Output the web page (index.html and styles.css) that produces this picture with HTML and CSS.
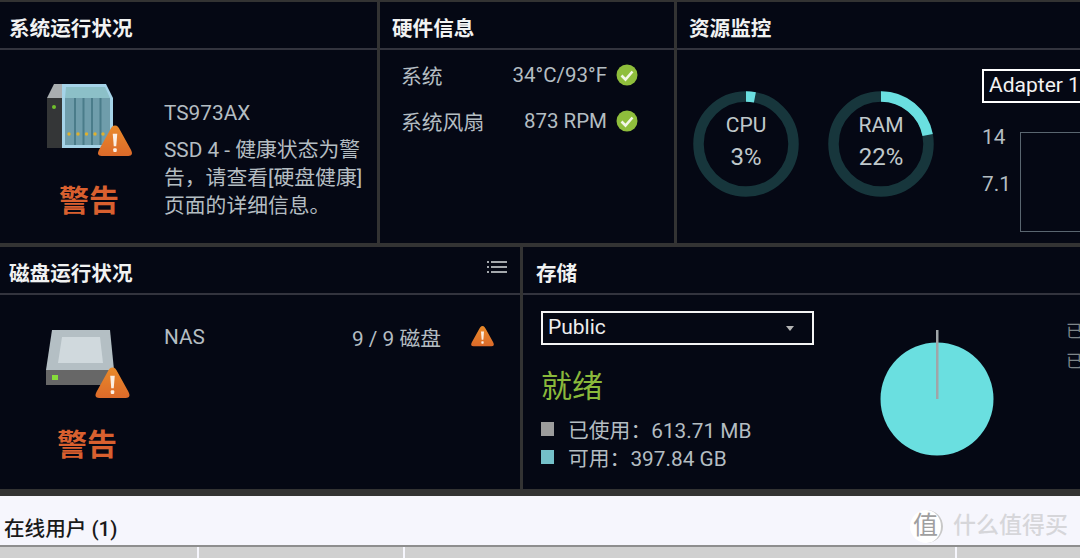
FILE: index.html
```html
<!DOCTYPE html>
<html lang="zh">
<head>
<meta charset="utf-8">
<title>NAS</title>
<link rel="stylesheet" href="styles.css">
</head>
<body>
<svg class="defs" width="0" height="0" aria-hidden="true">
  <defs>
    <linearGradient id="warnGrad" x1="0" y1="0" x2="0" y2="1">
      <stop offset="0" stop-color="#e98a2a"/>
      <stop offset="1" stop-color="#dc6a2a"/>
    </linearGradient>
    <symbol id="warn" viewBox="0 0 36 32">
      <path d="M18 1.500C20.500 1.500 21.500 3.500 23 6L33.500 25C35.500 29 34.500 31 31 31H5C1.500 31 0.500 29 2.500 25L13 6C14.500 3.500 15.500 1.500 18 1.500Z" fill="url(#warnGrad)"/>
      <path d="M15.800 9.500H20.200L19.200 21.500H16.800Z" fill="#fbeee2"/>
      <rect x="16.300" y="23.500" width="3.400" height="3.600" rx="1" fill="#fbeee2"/>
    </symbol>
  </defs>
</svg>
<main class="dash">
  <section class="row row-top">
    <article class="panel panel-sys">
      <header class="head"><h2>系统运行状况</h2></header>
      <div class="body split">
        <div class="state state-sys">
          <svg class="device" width="104" height="80" viewBox="0 0 104 80">
            <path d="M17 16L24 2H32V16Z" fill="#a9adaf"/>
            <rect x="17" y="16" width="15" height="50" fill="#343637"/>
            <circle cx="24" cy="25" r="2" fill="#6fc02c"/>
            <path d="M32 16V2H76L83 16V66H32Z" fill="#a5d3e8"/>
            <path d="M36 5H75L80 16H35Z" fill="#8cc0c8"/>
            <rect x="35" y="16" width="45" height="47" fill="#6f9dab"/>
            <g fill="#4a7c8a"><rect x="44" y="16" width="2" height="47"/><rect x="52.500" y="16" width="2" height="47"/><rect x="61" y="16" width="2" height="47"/><rect x="69.500" y="16" width="2" height="47"/></g>
            <g fill="#e0b12c"><circle cx="39" cy="52" r="1.700"/><circle cx="48" cy="52" r="1.700"/><circle cx="56.500" cy="52" r="1.700"/><circle cx="65" cy="52" r="1.700"/><circle cx="73" cy="52" r="1.700"/></g>
            <use href="#warn" x="66.500" y="42" width="37" height="33"/>
          </svg>
          <strong class="alert">警告</strong>
        </div>
        <div class="sys-text">
          <p class="model">TS973AX</p>
          <p class="desc">SSD 4 - 健康状态为警告，请查看[硬盘健康]页面的详细信息。</p>
        </div>
      </div>
    </article>
    <article class="panel panel-hw">
      <header class="head"><h2>硬件信息</h2></header>
      <div class="body hw">
        <div class="hw-row">
          <span class="hw-name">系统</span><span class="hw-val">34°C/93°F</span>
          <svg width="22" height="22" viewBox="0 0 22 22"><circle cx="11" cy="11" r="10.500" fill="#8fbe3c"/><path d="M5.500 11.500L9.500 15.500L16.500 7.500" fill="none" stroke="#f2f6e6" stroke-width="2.600"/></svg>
        </div>
        <div class="hw-row">
          <span class="hw-name">系统风扇</span><span class="hw-val">873 RPM</span>
          <svg width="22" height="22" viewBox="0 0 22 22"><circle cx="11" cy="11" r="10.500" fill="#8fbe3c"/><path d="M5.500 11.500L9.500 15.500L16.500 7.500" fill="none" stroke="#f2f6e6" stroke-width="2.600"/></svg>
        </div>
      </div>
    </article>
    <article class="panel panel-res">
      <header class="head"><h2>资源监控</h2></header>
      <div class="body res">
        <div class="ring">
          <svg width="106" height="106" viewBox="0 0 106 106"><circle cx="53" cy="53" r="47.500" fill="none" stroke="#17363c" stroke-width="10.500"/><circle cx="53" cy="53" r="47.500" fill="none" stroke="#6adfe0" stroke-width="10.500" pathLength="100" stroke-dasharray="3 97" transform="rotate(-90 53 53)"/></svg>
          <div class="ring-label"><span>CPU</span><span class="pct">3%</span></div>
        </div>
        <div class="ring">
          <svg width="106" height="106" viewBox="0 0 106 106"><circle cx="53" cy="53" r="47.500" fill="none" stroke="#17363c" stroke-width="10.500"/><circle cx="53" cy="53" r="47.500" fill="none" stroke="#6adfe0" stroke-width="10.500" pathLength="100" stroke-dasharray="22 78" transform="rotate(-90 53 53)"/></svg>
          <div class="ring-label"><span>RAM</span><span class="pct">22%</span></div>
        </div>
        <div class="net">
          <div class="adapter">Adapter 1</div>
          <div class="chart">
            <div class="axis"><span>14</span><span>7.1</span></div>
            <div class="plot"></div>
          </div>
        </div>
      </div>
    </article>
  </section>
  <section class="row row-bottom">
    <article class="panel panel-disk">
      <header class="head">
        <h2>磁盘运行状况</h2>
        <svg class="list-icon" width="20" height="14" viewBox="0 0 20 14"><g fill="#a4a8ac"><rect x="0" y="1" width="2" height="2"/><rect x="0" y="6" width="2" height="2"/><rect x="0" y="11" width="2" height="2"/><rect x="4" y="1" width="16" height="2"/><rect x="4" y="6" width="16" height="2"/><rect x="4" y="11" width="16" height="2"/></g></svg>
      </header>
      <div class="body split">
        <div class="state state-disk">
          <svg class="device" width="100" height="76" viewBox="0 0 100 76">
            <path d="M18 1H76L80 41H12Z" fill="#b4bfc4"/>
            <path d="M28 8H66L69 34H24Z" fill="#d0d9dd"/>
            <rect x="12" y="41" width="68" height="15" fill="#676767"/>
            <rect x="18" y="46" width="6" height="5" fill="#86dc3a"/>
            <use href="#warn" x="60" y="37" width="37" height="33"/>
          </svg>
          <strong class="alert">警告</strong>
        </div>
        <div class="disk-row">
          <span class="disk-name">NAS</span>
          <span class="disk-count">9 / 9 磁盘</span>
          <svg width="25" height="22" viewBox="0 0 36 32"><use href="#warn" width="36" height="32"/></svg>
        </div>
      </div>
    </article>
    <article class="panel panel-store">
      <header class="head"><h2>存储</h2></header>
      <div class="body store">
        <div class="store-left">
          <div class="select"><span>Public</span><i class="caret"></i></div>
          <div class="ready">就绪</div>
          <ul class="legend">
            <li><i class="sw sw-used"></i>已使用：613.71 MB</li>
            <li><i class="sw sw-free"></i>可用：397.84 GB</li>
          </ul>
        </div>
        <svg class="pie" width="114" height="126" viewBox="0 0 114 126"><circle cx="57" cy="69" r="56.500" fill="#6adfe0"/><rect x="56" y="0" width="2.500" height="69" fill="#a0a5a8"/></svg>
        <div class="store-side"><span>已使用</span><span>已分配</span></div>
      </div>
    </article>
  </section>
  <section class="users">
    <div class="users-head">
      <h2>在线用户 (1)</h2>
      <div class="brand"><span class="brand-mark">值</span><span class="brand-text">什么值得买</span></div>
    </div>
    <div class="table-head"><span class="c1"></span><span class="c2"></span><span class="c3"></span><span class="c4"></span></div>
  </section>
</main>
</body>
</html>
```
FILE: styles.css
```css
* { box-sizing: border-box; }
html, body { margin: 0; padding: 0; width: 1080px; height: 558px; overflow: hidden; }
body {
  background: #333;
  font-family: Roboto, "Noto Sans CJK SC", sans-serif;
  font-size: 20.8px;
  color: #b4bdc2;
}
.defs { display: block; height: 0; }
h2, p, ul { margin: 0; padding: 0; }
.dash { display: flex; flex-direction: column; padding-top: 2px; }

.row { display: flex; }
.row-top { height: 241px; gap: 3px; }
.row-bottom { height: 242px; gap: 3px; margin-top: 4px; }

.panel { background: #050814; display: flex; flex-direction: column; overflow: hidden; }
.panel-sys { width: 377px; }
.panel-hw { width: 294px; }
.panel-res { flex: 1; }
.panel-disk { width: 520px; }
.panel-store { flex: 1; }

.head {
  height: 48px;
  flex: none;
  display: flex;
  justify-content: space-between;
  padding: 13px 0 0 9px;
  border-bottom: 2px solid #33343e;
}
.head h2 { font-size: 20.6px; line-height: 28px; font-weight: 700; color: #f1f2f2; white-space: nowrap; }
.panel-hw .head { padding-left: 12px; }
.panel-res .head { padding-left: 12px; }
.panel-store .head { padding-left: 13px; }
.list-icon { margin: 0 13px 0 0; }

.body { flex: 1; }
.split { display: flex; }
.state { width: 164px; flex: none; display: flex; flex-direction: column; }
.device { display: block; }
.alert { display: block; font-size: 30px; line-height: 40px; font-weight: 700; color: #d9602f; }
.state-sys { padding: 32px 0 0 30px; }
.state-sys .alert { margin: 19px 0 0 29px; }
.state-disk { padding: 34px 0 0 34px; }
.state-disk .alert { margin: 20px 0 0 23px; }

.sys-text { width: 200px; padding-top: 49px; }
.model { line-height: 28px; }
.desc { margin-top: 9px; line-height: 28px; }

.hw { padding: 11px 0 0 21px; display: flex; flex-direction: column; gap: 18px; }
.hw-row { display: flex; align-items: center; height: 28px; width: 237px; }
.hw-name { flex: 1; }
.hw-val { margin-right: 9px; font-size: 20.5px; }

.res { display: flex; padding: 40px 0 0 16px; }
.ring { width: 106px; height: 106px; display: grid; margin-right: 29px; margin-top: 1px; }
.ring svg, .ring-label { grid-area: 1 / 1; }
.ring-label { display: flex; flex-direction: column; align-items: center; justify-content: center; padding-bottom: 6px; font-size: 21px; line-height: 32px; color: #c0c8cb; }
.pct { font-size: 24px; }
.net { margin-left: 19px; margin-top: -21px; width: 140px; flex: none; }
.adapter { width: 140px; height: 34px; border: 2px solid #fff; padding-left: 5px; line-height: 29px; color: #f2f2f2; font-size: 21px; white-space: nowrap; overflow: hidden; }
.chart { display: flex; margin-top: 29px; }
.axis { width: 38px; display: flex; flex-direction: column; gap: 19px; line-height: 28px; margin-top: -9px; }
.plot { flex: 1; height: 100px; border: 1px solid #5a6670; border-right: 0; }

.disk-row { flex: 1; display: flex; align-items: center; height: 28px; margin-top: 28px; padding-right: 25px; }
.disk-name { flex: 1; }
.disk-row svg { margin-left: 29px; margin-top: -2px; }

.store { display: flex; padding: 16px 0 0 18px; }
.store-left { width: 273px; flex: none; }
.select { height: 34px; border: 2px solid #f4f4f4; display: flex; justify-content: space-between; align-items: center; padding: 0 18px 2px 5px; color: #eee; font-size: 21px; }
.caret { width: 0; height: 0; margin-top: 2px; border: 4.500px solid transparent; border-top: 5px solid #b4b4b4; border-bottom: 0; }
.ready { font-size: 31px; line-height: 42px; color: #8ab93b; margin-top: 21px; }
.legend { list-style: none; margin-top: 7px; }
.legend li { display: flex; align-items: center; height: 28px; }
.sw { width: 13px; height: 14px; margin-right: 14px; }
.sw-used { background: #9c9c9c; }
.sw-free { background: #74c0c9; }
.pie { margin: 19px 0 0 66px; flex: none; }
.store-side { display: flex; flex-direction: column; margin: 5px 0 0 72px; line-height: 30px; font-size: 17px; color: #7e8589; white-space: nowrap; }

.users { margin-top: 7px; background: #f6f6fd; }
.users-head { height: 51px; display: flex; justify-content: space-between; padding: 19px 12px 0 4px; border-bottom: 2px solid #8e8e8e; }
.users-head h2 { font-size: 20.6px; line-height: 28px; font-weight: 500; color: #1a1a1a; white-space: nowrap; }
.brand { display: flex; gap: 10px; margin-top: -5px; }
.brand-mark { width: 33px; height: 33px; border-radius: 50%; background: #fff; border-right: 2px solid #c8c8c8; color: #9f9f9f; font-size: 25px; line-height: 31px; text-align: center; }
.brand-text { font-size: 23px; line-height: 32px; color: #d6d6da; font-weight: 500; white-space: nowrap; }
.table-head { height: 12px; display: flex; gap: 2px; background: #f6f6fd; }
.table-head span { background: #d0d0d0; }
.c1 { width: 197px; }
.c2 { width: 204px; }
.c3 { width: 550px; }
.c4 { flex: 1; }
```
